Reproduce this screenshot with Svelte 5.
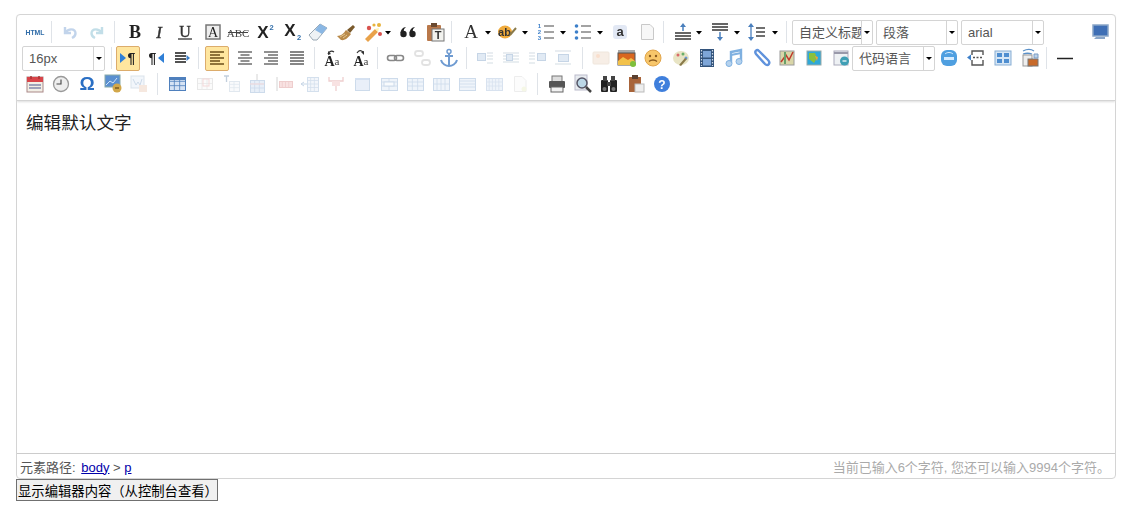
<script>
  const lines = (ys, x1 = 3, x2 = 17, c = '#444', w = 1.3) =>
    ys.map((y) => `<path d="M${x1} ${y}H${x2}" stroke="${c}" stroke-width="${w}"/>`).join('');
  const txt = (s, x, y, size, fill = '#222', extra = '') =>
    `<text x="${x}" y="${y}" font-size="${size}" fill="${fill}" text-anchor="middle" font-family="Liberation Serif, serif" ${extra}>${s}</text>`;
  const sans = (s, x, y, size, fill = '#222', extra = '') =>
    `<text x="${x}" y="${y}" font-size="${size}" fill="${fill}" text-anchor="middle" font-family="Liberation Sans, sans-serif" ${extra}>${s}</text>`;
  const grid = (x, y, w, h, cols, rows, fill = '#c9d8ee', stroke = '#6d93c6') => {
    let s = `<rect x="${x}.5" y="${y}.5" width="${w}" height="${h}" fill="${fill}" stroke="${stroke}"/>`;
    for (let i = 1; i < cols; i++) s += `<path d="M${x + (w * i) / cols} ${y}v${h}" stroke="${stroke}" stroke-width=".8"/>`;
    for (let i = 1; i < rows; i++) s += `<path d="M${x} ${y + (h * i) / rows}h${w}" stroke="${stroke}" stroke-width=".8"/>`;
    return s;
  };
  const pic = (x, y, w, h) =>
    `<rect x="${x}.5" y="${y}.5" width="${w}" height="${h}" fill="#b9cfe6" stroke="#7a9cc4"/>`;

  const icons = {
    html: sans('HTML', 10, 13, 7.5, '#2f6ca8', 'font-weight="700" textLength="19" lengthAdjust="spacingAndGlyphs"'),
    undo: `<path d="M5 5v6h6M5.500 10.500C8 6.500 15 6 15.500 11c.2 2.500-1.500 4-3.500 5" fill="none" stroke="#6f9bd1" stroke-width="2.400"/>`,
    redo: `<path d="M15 5v6H9M14.500 10.500C12 6.500 5 6 4.500 11c-.2 2.500 1.500 4 3.500 5" fill="none" stroke="#6fb3c9" stroke-width="2.400"/>`,
    bold: txt('B', 10, 16, 18, '#222', 'font-weight="700"'),
    italic: txt('I', 10, 16, 17, '#333', 'font-style="italic"  stroke="#333" stroke-width=".4"'),
    underline: txt('U', 10, 14.500, 16, '#333', 'stroke="#333" stroke-width=".4"') + `<path d="M3 17h14" stroke="#333" stroke-width="1.300"/>`,
    fontborder: `<rect x="3" y="3" width="14" height="14" fill="#eee" stroke="#777" stroke-width="1.500"/>` + txt('A', 10, 15, 14, '#222'),
    strike: txt('ABC', 10, 14.500, 11, '#444') + `<path d="M0 10.500h20" stroke="#444"/>`,
    sup: sans('X', 8, 16, 17, '#222', 'font-weight="700"') + sans('2', 16.500, 8, 7.500, '#2f6ca8', 'font-weight="700"'),
    sub: sans('X', 8, 14, 17, '#222', 'font-weight="700"') + sans('2', 17, 18, 7.500, '#2f6ca8', 'font-weight="700"'),
    eraser: `<path d="M1 13 12 2l7 4-10 12H5z" fill="#eef2f5" stroke="#9aa8b4"/><path d="M12 2l7 4-5 6-7-4z" fill="#8ab7e4"/>`,
    brush: `<path d="M1 14c4 0 7-3 9-6l5 4c-2 3-6 7-10 6z" fill="#b98a4a"/><path d="M11 8l6-5 2 2-5 6z" fill="#7a5a2c"/><path d="M4 15l5-3M7 16l4-3" stroke="#e2c58e"/>`,
    wand: `<path d="M2 17 12 7l3 3L5 20z" fill="#e9a24a"/><path d="M12 7l3 3 1-4z" fill="#fff3b0"/><circle cx="6" cy="6" r="2.200" fill="#d9534f"/><circle cx="16" cy="3" r="2" fill="#e8b33c"/><circle cx="17" cy="12" r="2" fill="#d9534f"/><circle cx="11" cy="3" r="1.600" fill="#e8b33c"/>`,
    quote: `<circle cx="5.500" cy="12" r="3.200" fill="#222"/><path d="M2.500 11C3 7 5 5.500 8 5c-2 1.500-2.500 3-2 5z" fill="#222"/><circle cx="14.500" cy="12" r="3.200" fill="#222"/><path d="M11.500 11c.5-4 2.500-5.500 5.500-6-2 1.500-2.500 3-2 5z" fill="#222"/>`,
    paste: `<rect x="2" y="3" width="14" height="16" rx="1" fill="#b9784a"/><rect x="6" y="1" width="6" height="4" fill="#6a4a30"/><rect x="7" y="7" width="12" height="12" fill="#f2f2ee" stroke="#777"/>` + sans('T', 13, 17, 11, '#333', 'font-weight="700"'),
    fore: txt('A', 10, 16, 19, '#333'),
    back: `<ellipse cx="8" cy="10" rx="7" ry="6.500" fill="#f0ab3c"/>` + sans('ab', 7.500, 14, 11, '#333', 'font-weight="700"') + `<path d="M13 13 19 6" stroke="#8a7a4a" stroke-width="2"/>`,
    ol: sans('1', 3.500, 6, 6, '#3c7fc9', 'font-weight="700"') + sans('2', 3.500, 12, 6, '#3c7fc9', 'font-weight="700"') + sans('3', 3.500, 18, 6, '#3c7fc9', 'font-weight="700"') + lines([4, 10, 16], 8, 18, '#666', 1.200),
    ul: `<circle cx="3.500" cy="4" r="1.800" fill="#3c7fc9"/><circle cx="3.500" cy="10" r="1.800" fill="#3c7fc9"/><circle cx="3.500" cy="16" r="1.800" fill="#3c7fc9"/>` + lines([4, 10, 16], 8, 18, '#666', 1.200),
    abox: `<rect x="3" y="3" width="14" height="14" rx="3" fill="#e2e8f4"/>` + sans('a', 10, 14, 13, '#333', 'font-weight="700"'),
    doc: `<path d="M4.500 2.500H13l3.500 3.500v11.500h-12z" fill="#f7f7f7" stroke="#c9c9c9"/>`,
    rowtop: `<path d="M10 1l3 4H7z" fill="#4a7fbd"/><path d="M10 4v5" stroke="#4a7fbd" stroke-width="1.500"/>` + lines([11, 14, 17], 2, 18, '#333', 1.500),
    rowbot: lines([2, 5, 8], 2, 18, '#333', 1.500) + `<path d="M10 19l3-4H7z" fill="#4a7fbd"/><path d="M10 10v5" stroke="#4a7fbd" stroke-width="1.500"/>`,
    lineh: `<path d="M4 1l3 4H1zM4 19l3-4H1z" fill="#4a7fbd"/><path d="M4 4v12" stroke="#4a7fbd" stroke-width="1.300"/>` + lines([6, 10, 14], 9, 18, '#333', 1.400),
    monitor: `<rect x="3" y="3" width="15" height="11" fill="#3f6fb5" stroke="#8aa6c8" stroke-width="1.500"/><path d="M6 15h9v2H4z" fill="#8aa6c8"/>`,
    ltr: `<path d="M2 5l6 5-6 5z" fill="#2f7fd6"/>` + sans('¶', 13.500, 15, 14, '#222', 'font-weight="700"'),
    rtl: sans('¶', 6.500, 15, 14, '#222', 'font-weight="700"') + `<path d="M18 5l-6 5 6 5z" fill="#2f7fd6"/>`,
    dir: lines([5, 8, 11, 14], 3, 14, '#333', 1.700) + `<path d="M18 10l-3.500-3v6z" fill="#3c7fc9"/>`,
    left: lines([4, 10, 16], 3, 17, '#6a4c18', 1.500) + lines([7, 13], 3, 13, '#6a4c18', 1.500),
    center: lines([4, 10, 16], 3, 17, '#555', 1.300) + lines([7, 13], 5.500, 14.500, '#555', 1.300),
    right: lines([4, 10, 16], 3, 17, '#555', 1.300) + lines([7, 13], 7, 17, '#555', 1.300),
    just: lines([4, 7, 10, 13, 16], 3, 17, '#444', 1.300),
    aaa: txt('A', 7.500, 18, 14, '#222', 'font-weight="700"') + txt('a', 15, 17, 11, '#444') + `<path d="M6 6c1-3 4-3.500 6-2" fill="none" stroke="#333" stroke-width="1.200"/><path d="M6 3l0 4 3-1z" fill="#333"/>`,
    aab: txt('A', 7.500, 18, 14, '#222', 'font-weight="700"') + txt('a', 15, 17, 11, '#444') + `<path d="M6 5c2-3 4-3 6-1" fill="none" stroke="#333" stroke-width="1.200"/><path d="M13 7V3l-3 1z" fill="#333"/>`,
    link: `<rect x="1.500" y="7.500" width="9" height="5" rx="2.500" fill="none" stroke="#888" stroke-width="1.600"/><rect x="8.500" y="7.500" width="9" height="5" rx="2.500" fill="none" stroke="#888" stroke-width="1.600"/>`,
    unlink: `<rect x="2" y="3" width="8" height="5" rx="2.500" fill="none" stroke="#bbb" stroke-width="1.800"/><rect x="9" y="12" width="8" height="5" rx="2.500" fill="none" stroke="#bbb" stroke-width="1.800"/>`,
    anchor: `<circle cx="10" cy="3.500" r="2" fill="none" stroke="#6f9bd1" stroke-width="1.500"/><path d="M10 5v13M6 8h8M2 12c1 4 5 6 8 6s7-2 8-6" fill="none" stroke="#6f9bd1" stroke-width="2"/>`,
    fl: pic(2, 5, 8, 7) + lines([5, 8, 11, 15], 12, 18, '#a9b9c9', 1.200),
    fn: lines([5, 8, 11, 14], 2, 18, '#a9b9c9', 1.200) + pic(5, 6, 6, 6),
    fr: pic(10, 5, 8, 7) + lines([5, 8, 11, 15], 2, 8, '#a9b9c9', 1.200),
    fc: lines([3, 16], 2, 18, '#a9b9c9', 1.200) + pic(5, 6, 10, 7),
    img: `<rect x="2" y="4" width="16" height="12" rx="1" fill="#eed9c4" stroke="#d9c4ae"/><circle cx="7" cy="8" r="2" fill="#f3b48a"/>`,
    img2: `<rect x="1" y="2" width="17" height="4" fill="#aaa"/><rect x="1" y="5" width="17" height="12" fill="#d9661f" stroke="#555"/><path d="M1 13l5-4 5 3 3-2 4 3v4H1z" fill="#f2c14a"/><circle cx="16" cy="16" r="3" fill="#7fc03c"/>`,
    emoji: `<circle cx="10" cy="10" r="8" fill="#f7c66a" stroke="#e0a44a"/><circle cx="7" cy="8" r="1.200" fill="#8a5a20"/><circle cx="13" cy="8" r="1.200" fill="#8a5a20"/><path d="M6 13.500c2-2 6-2 8 0" fill="none" stroke="#8a5a20" stroke-width="1.300"/>`,
    scrawl: `<ellipse cx="10" cy="10" rx="8" ry="7" fill="#e8e4c4"/><circle cx="7" cy="7" r="1.500" fill="#d96a6a"/><circle cx="12" cy="6" r="1.500" fill="#6ab06a"/><circle cx="15" cy="10" r="1.500" fill="#6a9ad9"/><path d="M8 17l6-7 2 1-6 7z" fill="#8a7a4a"/>`,
    video: `<rect x="3" y="1" width="14" height="18" fill="#33547c"/><rect x="6" y="3" width="8" height="6.500" fill="#7ea6d8"/><rect x="6" y="11" width="8" height="6.500" fill="#7ea6d8"/><path d="M4.500 2v16M15.500 2v16" stroke="#cfd9e6" stroke-width="1.200" stroke-dasharray="1.500 1.500"/>`,
    music: `<path d="M7 15V4l10-2v11" fill="none" stroke="#7fb0e0" stroke-width="2.400"/><circle cx="5" cy="15.500" r="3" fill="#b5d2ee" stroke="#7fb0e0"/><circle cx="15" cy="13.500" r="3" fill="#b5d2ee" stroke="#7fb0e0"/><path d="M7 7l10-2" stroke="#7fb0e0" stroke-width="2"/>`,
    attach: `<path d="M5 6l9 10c3 3 6-1 3-4L8 3C6 1 3 3 5 6l8 9" fill="none" stroke="#5f92dc" stroke-width="2.400"/>`,
    map: `<rect x="3" y="3" width="14" height="14" fill="#d9d6a8" stroke="#9a9a9a"/><path d="M4 14 9 7l3 5 4-8" stroke="#c0392b" stroke-width="1.500" fill="none"/><path d="M8 4v12" stroke="#6aa06a" stroke-width="2"/>`,
    gmap: `<rect x="3" y="3" width="14" height="14" fill="#2fa8d8" stroke="#9aa"/><path d="M5 5h6l2 5-3 5-5-4z" fill="#8ac03c"/><path d="M11 8l3 1-1 4z" fill="#e8a13c"/>`,
    frame: `<rect x="3" y="3" width="14" height="14" fill="#eef1f4" stroke="#aab"/><path d="M3 5h14" stroke="#99a" stroke-width="2"/><circle cx="13.500" cy="13" r="4.500" fill="#3f9fb5"/><path d="M11.500 13h4" stroke="#fff" stroke-width="1.200"/>`,
    globe: `<rect x="2" y="2" width="16" height="16" rx="6" fill="#4f9fe0"/><path d="M5 9h10v3H5z" fill="#d6ecff"/><path d="M6 6c2-2 6-2 8 0" stroke="#d6ecff" fill="none"/>`,
    pbreak: `<path d="M6 7V3h11v4M6 12v5h11v-5" fill="none" stroke="#555" stroke-width="1.400"/><path d="M7 9.500h10" stroke="#555" stroke-dasharray="2 1.500" stroke-width="1.300"/><path d="M1 9.500l4-3v6z" fill="#3c7fc9"/>`,
    tpl: `<rect x="2" y="3" width="16" height="14" fill="#d6e6f5" stroke="#88aed4"/><rect x="4" y="5" width="5" height="4" fill="#4f8ed0"/><rect x="11" y="5" width="5" height="4" fill="#4f8ed0"/><rect x="4" y="11" width="5" height="4" fill="#4f8ed0"/><rect x="11" y="11" width="5" height="4" fill="#4f8ed0"/>`,
    bg: `<path d="M3 3c4-2 8-2 11 0M3 6c3-1 6-1 9 0" fill="none" stroke="#5a90c8" stroke-width="1.300"/><rect x="3" y="7" width="9" height="11" fill="#eee" stroke="#999"/><rect x="8" y="11" width="10" height="7" fill="#c86a2a" stroke="#777"/><path d="M14 6h4v4h-4z" fill="#bcd2e8" stroke="#7a9cc4"/>`,
    hr: `<path d="M2 10.500h16" stroke="#222" stroke-width="1.500"/>`,
    date: `<rect x="2" y="3" width="16" height="15" fill="#f2efe6" stroke="#a88"/><rect x="2" y="3" width="16" height="5" fill="#d8454a"/>` + lines([11, 14], 4, 16, '#8a8fb0', 1.600) + `<path d="M6 2v3M14 2v3" stroke="#a33" stroke-width="1.500"/>`,
    clock: `<circle cx="10" cy="10" r="7.500" fill="#eee" stroke="#999" stroke-width="1.300"/><path d="M10 5.500V10H5.500" fill="none" stroke="#444" stroke-width="1.100"/>`,
    omega: sans('Ω', 10, 16, 19, '#2a6fc4', 'font-weight="700"'),
    wimg: `<rect x="2" y="1" width="15" height="12" fill="#5a8fd0" stroke="#8aa"/><path d="M3 11l4-4 3 2 4-5" stroke="#cfe4fa" fill="none"/><circle cx="14" cy="14" r="4.500" fill="#d2a74a"/><path d="M12 14h4" stroke="#7a5a20" stroke-width="1.500"/>`,
    pimg: `<rect x="2" y="2" width="13" height="12" fill="#e2ecf6" stroke="#a9bdd2"/><path d="M4 5l3 6 2-3 2 3 2-6" stroke="#8aa8cc" fill="none"/><rect x="10" y="11" width="8" height="7" fill="#ecc9b4"/>`,
    table: grid(2, 3, 16, 13, 3, 3, '#d6e3f4', '#4f80bd') + `<rect x="2" y="3" width="16" height="3" fill="#4f80bd"/>`,
    t1: grid(2, 4, 15, 11, 3, 2, '#f6f6f6', '#c9c9c9') + `<rect x="8" y="5" width="6" height="7" fill="none" stroke="#e8a6a6"/>`,
    t2: `<path d="M3 2h5M5.500 2v6" stroke="#6f8fb0" stroke-width="1.300"/>` + grid(8, 7, 10, 10, 2, 3, '#f2f5f8', '#b8c9da'),
    t3: `<path d="M10 0v6" stroke="#999"/>` + grid(3, 6, 14, 12, 3, 3, '#c9daf0', '#8aaad0') + `<path d="M3 10h14" stroke="#e8a6a6"/>`,
    t4: `<path d="M3 3v14" stroke="#999"/>` + grid(5, 7, 13, 6, 4, 1, '#f0bcbc', '#d88a8a'),
    t5: `<path d="M1 10h6M1 10l3-2M1 10l3 2" stroke="#7a9cc4"/>` + grid(7, 3, 11, 14, 3, 4, '#e4ecf6', '#9ab6d6'),
    t6: `<path d="M3 3v4h14V3M10 7v10" stroke="#d88a8a" stroke-width="1.300" fill="none"/><rect x="6" y="7" width="8" height="5" fill="#f0bcbc"/>`,
    t7: grid(3, 4, 14, 12, 1, 1, '#cddbf2', '#8aaad0') + `<rect x="3" y="4" width="14" height="2" fill="#9db9de"/>`,
    t8: grid(2, 4, 16, 12, 2, 3, '#dbe6f4', '#8aaad0') + `<rect x="5" y="8" width="10" height="4" fill="#f2f6fb" stroke="#8aaad0"/>`,
    t9: grid(2, 4, 16, 12, 3, 3, '#dbe6f4', '#8aaad0'),
    t10: grid(2, 4, 16, 12, 4, 2, '#dbe6f4', '#8aaad0'),
    t11: grid(2, 4, 16, 12, 1, 4, '#dbe6f4', '#8aaad0'),
    t12: grid(2, 4, 16, 12, 5, 3, '#dbe6f4', '#a3bbdb'),
    docx: `<path d="M4.500 2.500H12l4 4v11H4.500z" fill="#fafafa" stroke="#d6d6d6"/><circle cx="14" cy="15" r="2.500" fill="#e8eec4"/>`,
    print: `<rect x="5" y="2" width="10" height="6" fill="#ddd" stroke="#777"/><rect x="2" y="7" width="16" height="7" rx="1" fill="#555"/><rect x="4" y="13" width="12" height="5" fill="#f2f2f2" stroke="#666"/>`,
    preview: `<rect x="2" y="1" width="12" height="15" fill="#e8ecf0" stroke="#bbc"/><circle cx="9" cy="9" r="5" fill="#bcd8e8" stroke="#556" stroke-width="1.500"/><path d="M13 13l5 5" stroke="#444" stroke-width="2.500"/>`,
    search: `<rect x="2" y="6" width="7" height="12" rx="1" fill="#222"/><rect x="11" y="6" width="7" height="12" rx="1" fill="#222"/><rect x="4" y="2" width="4" height="5" fill="#444"/><rect x="12" y="2" width="4" height="5" fill="#444"/><rect x="8" y="8" width="4" height="4" fill="#444"/><circle cx="5.500" cy="15" r="2" fill="#777"/><circle cx="14.500" cy="15" r="2" fill="#777"/>`,
    drafts: `<rect x="3" y="3" width="12" height="15" fill="#a8643a"/><rect x="6" y="1" width="6" height="4" fill="#5a4030"/><rect x="9" y="10" width="9" height="8" fill="#eee" stroke="#bbb"/>`,
    help: `<circle cx="10" cy="10" r="8" fill="#3f7fdc"/>` + sans('?', 10, 14.500, 12, '#fff', 'font-weight="700"'),
    ar: `<path d="M1 3h6L4 6.500z" fill="#000"/>`
  };

  // [icon, centre x, flag]: d = disabled, a = active
  const rowData = [
    [['html', 35], ['sep', 51], ['undo', 70, 'd'], ['redo', 97, 'd'], ['sep', 114], ['bold', 135], ['italic', 159], ['underline', 185],
     ['fontborder', 213], ['strike', 238], ['sup', 265], ['sub', 292], ['eraser', 318], ['brush', 346], ['wand', 373], ['ar', 388],
     ['quote', 408], ['paste', 435], ['sep', 451], ['fore', 471], ['ar', 488], ['back', 507], ['ar', 525], ['ol', 546], ['ar', 563],
     ['ul', 583], ['ar', 600], ['abox', 620], ['doc', 647], ['sep', 663], ['rowtop', 683], ['ar', 699], ['rowbot', 720], ['ar', 737],
     ['lineh', 757], ['ar', 775], ['sep', 786],
     ['combo', 832.5, '自定义标题', 81], ['combo', 917, '段落', 82], ['combo', 1002.5, 'arial', 83], ['monitor', 1100]],
    [['combo', 63.5, '16px', 83], ['sep', 111], ['ltr', 128, 'a'], ['rtl', 156], ['dir', 182], ['sep', 198], ['left', 217, 'a'],
     ['center', 245], ['right', 271], ['just', 297], ['sep', 314], ['aaa', 332], ['aab', 361], ['sep', 377], ['link', 396],
     ['unlink', 423, 'd'], ['anchor', 449], ['sep', 466], ['fl', 485, 'd'], ['fn', 511, 'd'], ['fr', 537, 'd'], ['fc', 563, 'd'], ['sep', 582],
     ['img', 601, 'd'], ['img2', 627], ['emoji', 653], ['scrawl', 681], ['video', 707], ['music', 734], ['attach', 761], ['map', 787],
     ['gmap', 814], ['frame', 841], ['combo', 893.5, '代码语言', 83], ['globe', 949], ['pbreak', 976], ['tpl', 1003], ['bg', 1030],
     ['sep', 1046], ['hr', 1065]],
    [['date', 35], ['clock', 61], ['omega', 87], ['wimg', 113], ['pimg', 139, 'd'], ['sep', 157], ['table', 177], ['t1', 205, 'd'],
     ['t2', 231, 'd'], ['t3', 257, 'd'], ['t4', 284, 'd'], ['t5', 310, 'd'], ['t6', 336, 'd'], ['t7', 362, 'd'], ['t8', 389, 'd'],
     ['t9', 415, 'd'], ['t10', 441, 'd'], ['t11', 467, 'd'], ['t12', 494, 'd'], ['docx', 520, 'd'], ['sep', 537], ['print', 557],
     ['preview', 583], ['search', 609], ['drafts', 636], ['help', 662]]
  ];

  const widthOf = (it) => {
    if (it[0] === 'sep') return 1;
    if (it[0] === 'ar') return 8;
    if (it[0] === 'combo') return it[3];
    return it[2] === 'a' ? 24 : 20;
  };

  // turn centre positions into the gap before each item (row starts at x=17)
  const rows = rowData.map((row) => {
    let right = 17;
    return row.map((it) => {
      const w = widthOf(it);
      const gap = it[1] - w / 2 - right;
      right = it[1] + w / 2;
      return { name: it[0], flag: it[2], label: it[2], w, gap };
    });
  });
</script>

<main class="page">
  <div class="editor">
    <div class="toolbar">
      {#each rows as row}
        <div class="row">
          {#each row as it}
            {#if it.name === 'sep'}
              <span class="sep" style="margin-left:{it.gap}px"></span>
            {:else if it.name === 'combo'}
              <span class="combo" style="margin-left:{it.gap}px;width:{it.w}px">
                <span class="combo-label">{it.label}</span>
                <span class="combo-arrow"></span>
              </span>
            {:else}
              <span
                class="btn"
                class:active={it.flag === 'a'}
                class:off={it.flag === 'd'}
                style="margin-left:{it.gap}px;width:{it.w}px"
              >
                <svg viewBox={it.name === 'ar' ? '0 0 8 8' : '0 0 20 20'} class:small={it.name === 'ar'}>{@html icons[it.name]}</svg>
              </span>
            {/if}
          {/each}
        </div>
      {/each}
    </div>
    <div class="content"><p>编辑默认文字</p></div>
    <div class="bottom">
      <span class="path">元素路径: <a class="first" href="#body">body</a> &gt; <a href="#p">p</a></span>
      <span class="count">当前已输入6个字符, 您还可以输入9994个字符。</span>
    </div>
  </div>
  <button class="show">显示编辑器内容（从控制台查看）</button>
</main>

<style>
  :global(body) {
    background: #fff;
    font-family: 'Liberation Sans', 'Noto Sans CJK SC', sans-serif;
  }

  .page {
    padding: 14px 0 0 16px;
  }

  .editor {
    box-sizing: border-box;
    width: 1100px;
    height: 465px;
    border: 1px solid #d4d4d4;
    border-radius: 4px;
    display: flex;
    flex-direction: column;
  }

  .toolbar {
    height: 81px;
    padding-top: 4px;
    border-bottom: 1px solid #d4d4d4;
    box-shadow: 0 1px 2px #ddd;
    flex: none;
  }

  .row {
    display: flex;
    align-items: center;
    height: 26px;
  }

  .sep {
    flex: none;
    width: 1px;
    height: 22px;
    background: #dfe3e8;
  }

  .btn {
    flex: none;
    height: 25px;
    box-sizing: border-box;
    display: flex;
    align-items: center;
    justify-content: center;
  }

  .btn svg {
    width: 20px;
    height: 20px;
    flex: none;
    overflow: visible;
    filter: blur(0.3px);
  }

  .btn svg.small {
    width: 8px;
    height: 8px;
    filter: none;
  }

  .off {
    opacity: 0.42;
  }

  .active {
    background: #ffe69f;
    border: 1px solid #dcac6c;
    border-radius: 2px;
  }

  .combo {
    flex: none;
    box-sizing: border-box;
    height: 25px;
    display: flex;
    border: 1px solid #d4d4d4;
    border-radius: 2px;
    font-size: 13px;
    color: #555;
  }

  .combo-label {
    flex: 1;
    min-width: 0;
    overflow: hidden;
    white-space: nowrap;
    padding-left: 6px;
    line-height: 23px;
  }

  .combo-arrow {
    flex: none;
    width: 10px;
    border-left: 1px solid #d4d4d4;
    display: flex;
    align-items: center;
    justify-content: center;
  }

  .combo-arrow::after {
    content: '';
    border-style: solid;
    border-width: 3px 3px 0;
    border-color: #000 transparent transparent;
  }

  .content {
    flex: 1;
    padding: 0 9px;
    font-size: 17.6px;
    color: #222;
  }

  .content p {
    margin: 10px 0 0;
    line-height: 24px;
  }

  .bottom {
    flex: none;
    height: 25px;
    box-sizing: border-box;
    border-top: 1px solid #ccc;
    padding: 0 5px 0 3px;
    display: flex;
    justify-content: space-between;
    align-items: center;
    font-size: 13px;
  }

  .path {
    color: #555;
  }

  .path a {
    color: #00a;
  }

  .path a.first {
    margin-left: 2px;
  }

  .count {
    color: #aaa;
  }

  .show {
    display: block;
    box-sizing: border-box;
    width: 202px;
    height: 22px;
    padding: 0 0 0 1px;
    text-align: left;
    border: 1px solid #707070;
    border-radius: 0;
    background: #f0f0f0;
    font: 13.33px 'Liberation Sans', 'Noto Sans CJK SC', sans-serif;
    color: #000;
    white-space: nowrap;
  }
</style>
